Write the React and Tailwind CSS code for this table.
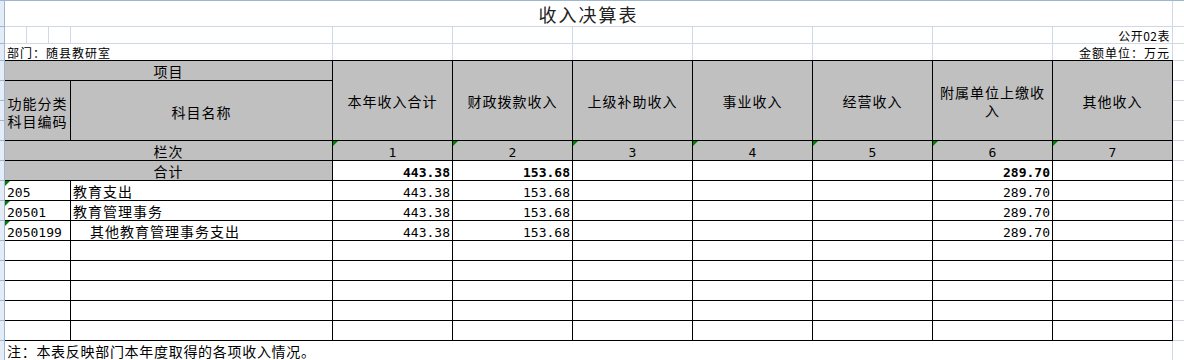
import React from "react";

const grid = "border-[#d0d7e5]";
const heads = ["本年收入合计", "财政拨款收入", "上级补助收入", "事业收入", "经营收入", "附属单位上缴收入", "其他收入"];

const rows = [
  { code: "205", name: "教育支出", vals: ["443.38", "153.68", "", "", "", "289.70", ""] },
  { code: "20501", name: "教育管理事务", vals: ["443.38", "153.68", "", "", "", "289.70", ""] },
  { code: "2050199", name: "其他教育管理事务支出", indent: true, vals: ["443.38", "153.68", "", "", "", "289.70", ""] },
];

const Flag = () => (
  <span className="absolute left-0 top-0 w-0 h-0 border-t-[5px] border-r-[5px] border-t-[#008000] border-r-transparent" />
);

const Cell = ({ className = "", children }) => (
  <div className={`relative border-r border-b border-black ${className}`}>{children}</div>
);

const LeftStrip = () => {
  const ticks = [26, 17, 17, 20, 20, 20, 20, 20, 20, 20, 20, 20, 20, 20, 20, 20, 20, 20, 20, 20];
  return (
    <div className="w-[5px] h-[360px] bg-[#e4ecf7] border-r border-[#9eb6ce] border-t flex flex-col">
      {ticks.map((h, i) => (
        <div key={i} style={{ height: h }} className="shrink-0 border-b border-[#9eb6ce]" />
      ))}
    </div>
  );
};

const App = () => {
  const num = "font-['DejaVu_Sans_Mono',monospace] text-[13px] leading-[13px]";

  return (
    <div className="flex w-[1184px] h-[360px] bg-white overflow-hidden text-black font-['Noto_Sans_CJK_SC',sans-serif] text-[14px] leading-[16px]">
      <LeftStrip />
      <div className="w-[1179px] flex flex-col">
        <div className="h-px bg-[#9eb6ce] shrink-0" />

        {/* 标题 */}
        <div className={`h-[26px] flex border-b ${grid} shrink-0`}>
          <div className={`w-[1168px] border-r ${grid} flex items-center justify-center text-[18px] tracking-[2px] leading-[22px] text-[#222]`}>
            收入决算表
          </div>
        </div>

        <div className={`h-[17px] flex border-b ${grid} shrink-0`}>
          <div className={`w-[22px] border-r ${grid}`} />
          <div className={`w-[22px] border-r ${grid}`} />
          <div className={`w-[22px] border-r ${grid}`} />
          <div className={`w-[262px] border-r ${grid}`} />
          {heads.map((_, i) => (
            <div key={i} className={`w-[120px] border-r ${grid} flex items-end justify-end pr-[2px] text-[12px] leading-[15px] tracking-[0.5px]`}>
              {i === 6 ? "公开02表" : ""}
            </div>
          ))}
        </div>

        <div className="h-[16px] flex shrink-0">
          <div className={`w-[328px] border-r ${grid} flex items-end pl-[2px] text-[12px] leading-[15px] tracking-[1px]`}>
            部门：随县教研室
          </div>
          {heads.map((_, i) => (
            <div key={i} className={`w-[120px] border-r ${grid} flex items-end justify-end pr-[2px] text-[12px] leading-[15px] tracking-[1px] whitespace-nowrap`}>
              {i === 6 ? "金额单位：万元" : ""}
            </div>
          ))}
        </div>

        <div className="flex shrink-0">
          <div className="grid grid-cols-[66px_262px_repeat(7,120px)] grid-rows-[20px_60px_repeat(10,20px)] border-t border-black w-[1168px]">
            <Cell className="col-span-2 bg-[#c0c0c0] flex items-end justify-center tracking-[1px] pb-[1px]">项目</Cell>
            {heads.map((h, i) => (
              <Cell key={h} className="row-span-2 bg-[#c0c0c0] flex items-center justify-center text-center tracking-[1px] leading-[18px]">
                {i === 5 ? (
                  <span>
                    附属单位上缴收
                    <br />入
                  </span>
                ) : (
                  h
                )}
              </Cell>
            ))}
            <Cell className="bg-[#c0c0c0] flex items-center justify-center text-center leading-[18px] tracking-[1px] pt-[2px]">
              <span>
                功能分类
                <br />
                科目编码
              </span>
            </Cell>
            <Cell className="bg-[#c0c0c0] flex items-center justify-center tracking-[1px] pt-[2px]">科目名称</Cell>

            <Cell className="col-span-2 bg-[#c0c0c0] flex items-end justify-center tracking-[1px] pb-[1px]">栏次</Cell>
            {heads.map((h, i) => (
              <Cell key={"n" + i} className={`bg-[#c0c0c0] flex items-end justify-center pb-[1px] ${num}`}>
                <Flag />
                {i + 1}
              </Cell>
            ))}

            <Cell className="col-span-2 bg-[#c0c0c0] flex items-end justify-center tracking-[1px] pb-[1px]">合计</Cell>
            {rows[0].vals.map((v, i) => (
              <Cell key={"t" + i} className={`flex items-end justify-end pr-[2px] pb-[1px] font-bold ${num}`}>
                {v}
              </Cell>
            ))}

            {rows.map((r) => (
              <React.Fragment key={r.code}>
                <Cell className={`flex items-end pl-[2px] pb-[1px] ${num}`}>
                  <Flag />
                  {r.code}
                </Cell>
                <Cell className={`flex items-end pb-[1px] tracking-[1px] ${r.indent ? "pl-[19px]" : "pl-[2px]"}`}>{r.name}</Cell>
                {r.vals.map((v, i) => (
                  <Cell key={i} className={`flex items-end justify-end pr-[2px] pb-[1px] ${num}`}>
                    {v}
                  </Cell>
                ))}
              </React.Fragment>
            ))}

            {[0, 1, 2, 3, 4].map((k) => (
              <React.Fragment key={"e" + k}>
                <Cell />
                <Cell />
                {heads.map((h) => (
                  <Cell key={h} />
                ))}
              </React.Fragment>
            ))}
          </div>
          <div className="flex-1 flex flex-col">
            <div className="h-px bg-[#d0d7e5]" />
            {Array.from({ length: 14 }).map((_, i) => (
              <div key={i} className={`h-[20px] border-b ${grid}`} />
            ))}
          </div>
        </div>

        <div className="h-[19px] flex shrink-0">
          <div className={`w-[1168px] border-r ${grid} flex items-center pl-[2px] leading-[16px] tracking-[0.7px]`}>
            注：本表反映部门本年度取得的各项收入情况。
          </div>
        </div>
      </div>
    </div>
  );
};

export default App;
